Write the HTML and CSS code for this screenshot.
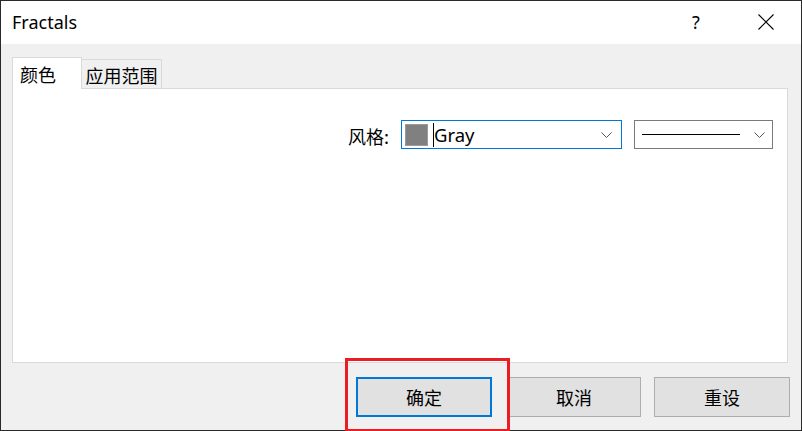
FILE: index.html
```html
<!DOCTYPE html>
<html lang="zh">
<head>
<meta charset="utf-8">
<title>Fractals</title>
<link rel="stylesheet" href="styles.css">
</head>
<body>
<div class="window">
  <div class="titlebar">
    <span class="title">Fractals</span>
    <span class="help">?</span>
    <svg class="close" width="16" height="16" viewBox="0 0 16 16"><path d="M0.5 0.5 L15.5 15.5 M15.5 0.5 L0.5 15.5" stroke="#000" stroke-width="1.1" fill="none"/></svg>
  </div>
  <div class="content">
    <div class="tabs">
      <div class="tab active">颜色</div>
      <div class="tab">应用范围</div>
    </div>
    <div class="panel">
      <div class="style-row">
        <span class="label">风格:</span>
        <div class="combo color-combo">
          <span class="swatch"></span>
          <span class="caret"></span>
          <span class="combo-text">Gray</span>
          <svg class="chev" width="11" height="6" viewBox="0 0 11 6"><path d="M0.5 0.5 L5.5 5.5 L10.5 0.5" stroke="#555" stroke-width="1" fill="none"/></svg>
        </div>
        <div class="combo line-combo">
          <span class="line"></span>
          <svg class="chev" width="11" height="6" viewBox="0 0 11 6"><path d="M0.5 0.5 L5.5 5.5 L10.5 0.5" stroke="#555" stroke-width="1" fill="none"/></svg>
        </div>
      </div>
    </div>
    <div class="buttons">
      <button class="btn default">确定</button>
      <button class="btn cancel">取消</button>
      <button class="btn reset">重设</button>
    </div>
  </div>
  <div class="highlight"></div>
</div>
</body>
</html>
```
FILE: styles.css
```css
* { box-sizing: border-box; }
html, body { margin: 0; padding: 0; }
body {
  width: 802px;
  height: 431px;
  overflow: hidden;
  font-family: "Noto Sans", "Noto Sans CJK SC", sans-serif;
  background: #ffffff;
}
.window {
  position: relative;
  width: 802px;
  height: 431px;
  border: 1px solid #2a2a2a;
  display: flex;
  flex-direction: column;
  background: #f0f0f0;
}
.titlebar {
  height: 43px;
  flex: none;
  background: #ffffff;
  display: flex;
  align-items: center;
  padding-left: 11px;
  color: #000;
}
.title {
  font-size: 18px;
  flex: 1;
  line-height: 1;
  margin-top: -1px;
}
.help {
  font-family: "Noto Sans", sans-serif;
  font-size: 18px;
  width: 16px;
  padding-left: 4px;
  margin-right: 54px;
  margin-top: -2px;
  line-height: 1;
}
.close {
  margin-right: 27px;
  margin-top: -2px;
}
.content {
  flex: 1;
  padding: 13px 13px 0 11px;
  display: flex;
  flex-direction: column;
}
.tabs {
  display: flex;
  align-items: flex-end;
  height: 31px;
  flex: none;
}
.tab {
  font-family: "Noto Sans CJK SC", sans-serif;
  font-size: 18px;
  color: #000;
  height: 29px;
  width: 81px;
  border: 1px solid #d9d9d9;
  border-bottom: none;
  margin-left: -1px;
  background: #f0f0f0;
  display: flex;
  align-items: center;
  justify-content: center;
  padding-top: 1px;
}
.tab.active {
  position: relative;
  z-index: 1;
  height: 32px;
  width: 70px;
  margin-left: 0;
  margin-bottom: -1px;
  background: #ffffff;
  justify-content: flex-start;
  padding-left: 7px;
  padding-top: 0;
}
.panel {
  height: 275px;
  flex: none;
  background: #ffffff;
  border: 1px solid #d9d9d9;
  padding: 31px 14px 0 0;
}
.style-row {
  display: flex;
  justify-content: flex-end;
  align-items: center;
}
.label {
  font-family: "Noto Sans CJK SC", sans-serif;
  font-size: 18px;
  margin-right: 12px;
  margin-top: 2px;
}
.combo {
  height: 29px;
  border: 1px solid #7a7a7a;
  background: #fff;
  display: flex;
  align-items: center;
}
.color-combo {
  width: 221px;
  border-color: #0078d7;
  padding-left: 3px;
  margin-right: 12px;
}
.swatch {
  width: 23px;
  height: 22px;
  background: #808080;
  border: 1px solid #9a9a9a;
  flex: none;
}
.caret {
  width: 1px;
  height: 24px;
  background: #000;
  margin-left: 5px;
  flex: none;
}
.combo-text {
  font-family: "Noto Sans", sans-serif;
  font-size: 18.5px;
  flex: 1;
  line-height: 1;
  margin-top: 1px;
}
.color-combo .chev { margin-right: 9px; }
.line-combo {
  width: 139px;
  padding-left: 7px;
}
.line {
  width: 98px;
  height: 1px;
  background: #000;
  flex: none;
}
.line-combo .chev { margin-left: auto; margin-right: 7px; }
.buttons {
  display: flex;
  justify-content: flex-end;
  margin-top: 14px;
  margin-right: -2px;
}
.btn {
  font-family: "Noto Sans CJK SC", sans-serif;
  font-size: 18px;
  color: #000;
  height: 40px;
  background: #e1e1e1;
  border: 1px solid #adadad;
  padding: 0;
  margin: 0;
}
.btn.default {
  border: 2px solid #0078d7;
  width: 136px;
}
.btn.cancel {
  width: 134px;
  margin-left: 15px;
}
.btn.reset {
  width: 136px;
  margin-left: 13px;
}
.highlight {
  position: absolute;
  left: 344px;
  top: 357px;
  width: 165px;
  height: 74px;
  border: 3px solid #ec1c24;
}
```
